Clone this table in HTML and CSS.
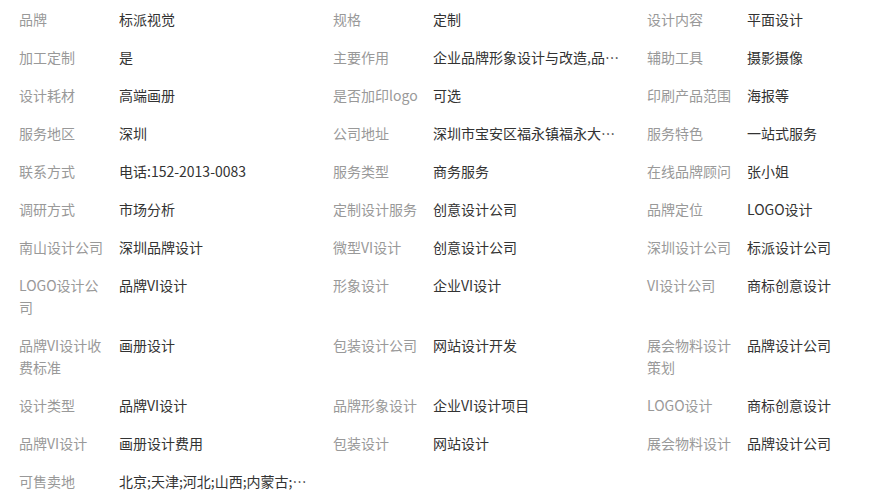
FILE: index.html
```html
<!DOCTYPE html>
<html lang="zh-CN">
<head>
    <meta charset="UTF-8">
    <meta name="viewport" content="width=device-width, initial-scale=1.0">
    <title>产品参数</title>
    <link rel="stylesheet" href="styles.css">
</head>
<body>
    <div class="attr-list">
        <div class="attr"><span class="attr-name">品牌</span><span class="attr-value">标派视觉</span></div>
        <div class="attr"><span class="attr-name">规格</span><span class="attr-value">定制</span></div>
        <div class="attr"><span class="attr-name">设计内容</span><span class="attr-value">平面设计</span></div>

        <div class="attr"><span class="attr-name">加工定制</span><span class="attr-value">是</span></div>
        <div class="attr"><span class="attr-name">主要作用</span><span class="attr-value">企业品牌形象设计与改造,品牌策划与推广</span></div>
        <div class="attr"><span class="attr-name">辅助工具</span><span class="attr-value">摄影摄像</span></div>

        <div class="attr"><span class="attr-name">设计耗材</span><span class="attr-value">高端画册</span></div>
        <div class="attr"><span class="attr-name">是否加印logo</span><span class="attr-value">可选</span></div>
        <div class="attr"><span class="attr-name">印刷产品范围</span><span class="attr-value">海报等</span></div>

        <div class="attr"><span class="attr-name">服务地区</span><span class="attr-value">深圳</span></div>
        <div class="attr"><span class="attr-name">公司地址</span><span class="attr-value">深圳市宝安区福永镇福永大道桥头社区</span></div>
        <div class="attr"><span class="attr-name">服务特色</span><span class="attr-value">一站式服务</span></div>

        <div class="attr"><span class="attr-name">联系方式</span><span class="attr-value">电话:152-2013-0083</span></div>
        <div class="attr"><span class="attr-name">服务类型</span><span class="attr-value">商务服务</span></div>
        <div class="attr"><span class="attr-name">在线品牌顾问</span><span class="attr-value">张小姐</span></div>

        <div class="attr"><span class="attr-name">调研方式</span><span class="attr-value">市场分析</span></div>
        <div class="attr"><span class="attr-name">定制设计服务</span><span class="attr-value">创意设计公司</span></div>
        <div class="attr"><span class="attr-name">品牌定位</span><span class="attr-value">LOGO设计</span></div>

        <div class="attr"><span class="attr-name">南山设计公司</span><span class="attr-value">深圳品牌设计</span></div>
        <div class="attr"><span class="attr-name">微型VI设计</span><span class="attr-value">创意设计公司</span></div>
        <div class="attr"><span class="attr-name">深圳设计公司</span><span class="attr-value">标派设计公司</span></div>

        <div class="attr"><span class="attr-name">LOGO设计公司</span><span class="attr-value">品牌VI设计</span></div>
        <div class="attr"><span class="attr-name">形象设计</span><span class="attr-value">企业VI设计</span></div>
        <div class="attr"><span class="attr-name">VI设计公司</span><span class="attr-value">商标创意设计</span></div>

        <div class="attr"><span class="attr-name">品牌VI设计收费标准</span><span class="attr-value">画册设计</span></div>
        <div class="attr"><span class="attr-name">包装设计公司</span><span class="attr-value">网站设计开发</span></div>
        <div class="attr"><span class="attr-name">展会物料设计策划</span><span class="attr-value">品牌设计公司</span></div>

        <div class="attr"><span class="attr-name">设计类型</span><span class="attr-value">品牌VI设计</span></div>
        <div class="attr"><span class="attr-name">品牌形象设计</span><span class="attr-value">企业VI设计项目</span></div>
        <div class="attr"><span class="attr-name">LOGO设计</span><span class="attr-value">商标创意设计</span></div>

        <div class="attr"><span class="attr-name">品牌VI设计</span><span class="attr-value">画册设计费用</span></div>
        <div class="attr"><span class="attr-name">包装设计</span><span class="attr-value">网站设计</span></div>
        <div class="attr"><span class="attr-name">展会物料设计</span><span class="attr-value">品牌设计公司</span></div>

        <div class="attr"><span class="attr-name">可售卖地</span><span class="attr-value">北京;天津;河北;山西;内蒙古;辽宁;吉林;黑龙江</span></div>
    </div>
</body>
</html>
```

FILE: styles.css
```css
body {
    margin: 0;
    padding: 0;
    background-color: #fff;
    font-family: "Noto Sans CJK SC", "Noto Sans", sans-serif;
    font-size: 14px;
    overflow: hidden;
}
.attr-list {
    display: grid;
    grid-template-columns: 314px 314px minmax(0, 1fr);
    padding-left: 19px;
}
.attr {
    display: flex;
    align-items: flex-start;
    min-width: 0;
    padding: 8px 0;
    line-height: 22px;
}
.attr-name {
    flex: 0 0 90px;
    margin-right: 10px;
    color: #999;
    word-break: break-all;
}
.attr-value {
    flex: 0 1 190px;
    min-width: 0;
    color: #333;
    white-space: nowrap;
    overflow: hidden;
    text-overflow: ellipsis;
}
```
